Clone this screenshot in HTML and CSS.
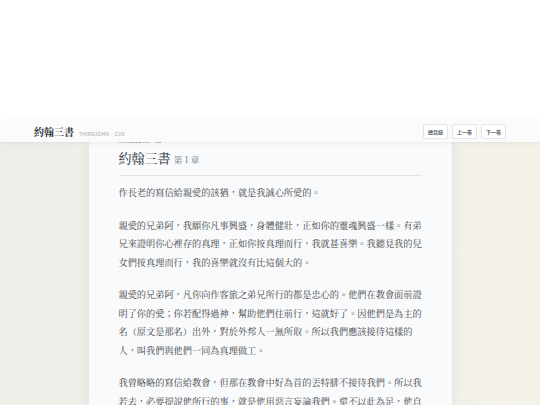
FILE: index.html
```html
<!DOCTYPE html>
<html lang="zh-Hant">
<head>
<meta charset="utf-8">
<title>約翰三書</title>
<link rel="stylesheet" href="styles.css">
</head>
<body>
<div class="top-space"></div>
<header class="bar">
  <div class="brand">
    <span class="brand-name">約翰三書</span>
    <span class="brand-sub">THIRDJOHN · CUV</span>
  </div>
  <nav class="actions">
    <span class="btn">總目錄</span>
    <span class="btn">上一卷</span>
    <span class="btn">下一卷</span>
  </nav>
</header>
<main class="stage">
  <article class="card">
    <div class="eyebrow">THIRDJOHN · 01</div>
    <h1 class="title">約翰三書 <span class="chap">第 1 章</span></h1>
    <div class="body">
      <p>作長老的寫信給親愛的該猶，就是我誠心所愛的。</p>
      <p>親愛的兄弟阿，我願你凡事興盛，身體健壯，正如你的靈魂興盛一樣。有弟兄來證明你心裡存的真理，正如你按真理而行，我就甚喜樂。我聽見我的兒女們按真理而行，我的喜樂就沒有比這個大的。</p>
      <p>親愛的兄弟阿，凡你向作客旅之弟兄所行的都是忠心的。他們在教會面前證明了你的愛；你若配得過神，幫助他們往前行，這就好了。因他們是為主的名（原文是那名）出外，對於外邦人一無所取。所以我們應該接待這樣的人，叫我們與他們一同為真理做工。</p>
      <p>我曾略略的寫信給教會，但那在教會中好為首的丟特腓不接待我們。所以我若去，必要提說他所行的事，就是他用惡言妄論我們。還不以此為足，他自己不接待弟兄，有人願意接待，他也禁止，並且將接待的人趕出教會。</p>
    </div>
  </article>
</main>
</body>
</html>
```
FILE: styles.css
```css
html, body {
  margin: 0;
  padding: 0;
  background: #ffffff;
  overflow: hidden;
}
body {
  width: 540px;
  height: 405px;
  font-family: "Noto Serif CJK TC", "Liberation Serif", "Noto Sans CJK TC", serif;
  color: #333333;
}
.top-space {
  height: 120px;
  background: #ffffff;
}
.bar {
  position: relative;
  z-index: 2;
  height: 22px;
  box-sizing: border-box;
  padding: 0 34px;
  display: flex;
  align-items: center;
  justify-content: space-between;
  background: #fbfbfc;
  box-shadow: 0 1px 4px rgba(0, 0, 0, 0.07);
}
.brand {
  display: flex;
  align-items: baseline;
  gap: 5px;
}
.brand-name {
  font-size: 10px;
  font-weight: 700;
  color: #2b2f36;
}
.brand-sub {
  font-family: "Liberation Sans", sans-serif;
  font-size: 4.6px;
  letter-spacing: 0.4px;
  color: #9aa0a8;
}
.actions {
  display: flex;
  gap: 4px;
}
.btn {
  display: flex;
  align-items: center;
  height: 15px;
  box-sizing: border-box;
  padding: 0 4px;
  border: 1px solid #e1e4e8;
  border-radius: 2px;
  background: #ffffff;
  font-family: "Noto Sans CJK TC", sans-serif;
  font-size: 5px;
  font-weight: 700;
  color: #555b63;
}
.stage {
  height: 263px;
  overflow: hidden;
  display: flex;
  justify-content: center;
  background: linear-gradient(90deg, #eeeee9 0%, #f0efe9 40%, #f3f1e8 100%);
}
.card {
  width: 363px;
  box-sizing: border-box;
  margin-top: -3px;
  padding: 0 30px;
  background: #f9fafc;
  box-shadow: 0 0 10px rgba(0, 0, 0, 0.08);
}
.eyebrow {
  font-family: "Liberation Sans", sans-serif;
  font-size: 4.6px;
  line-height: 6px;
  letter-spacing: 0.5px;
  font-weight: 700;
  color: #8a9098;
}
.title {
  margin: 5px 0 0;
  padding-bottom: 8px;
  border-bottom: 1px solid #e3e5e8;
  font-size: 13px;
  line-height: 16px;
  font-weight: 400;
  color: #2b2f36;
}
.chap {
  font-size: 8.5px;
  color: #666b72;
}
.body {
  padding-top: 7px;
  width: 304px;
}
.body p {
  margin: 0 0 14px;
  font-size: 9.2px;
  line-height: 18.5px;
  color: #3a3d42;
}
```
